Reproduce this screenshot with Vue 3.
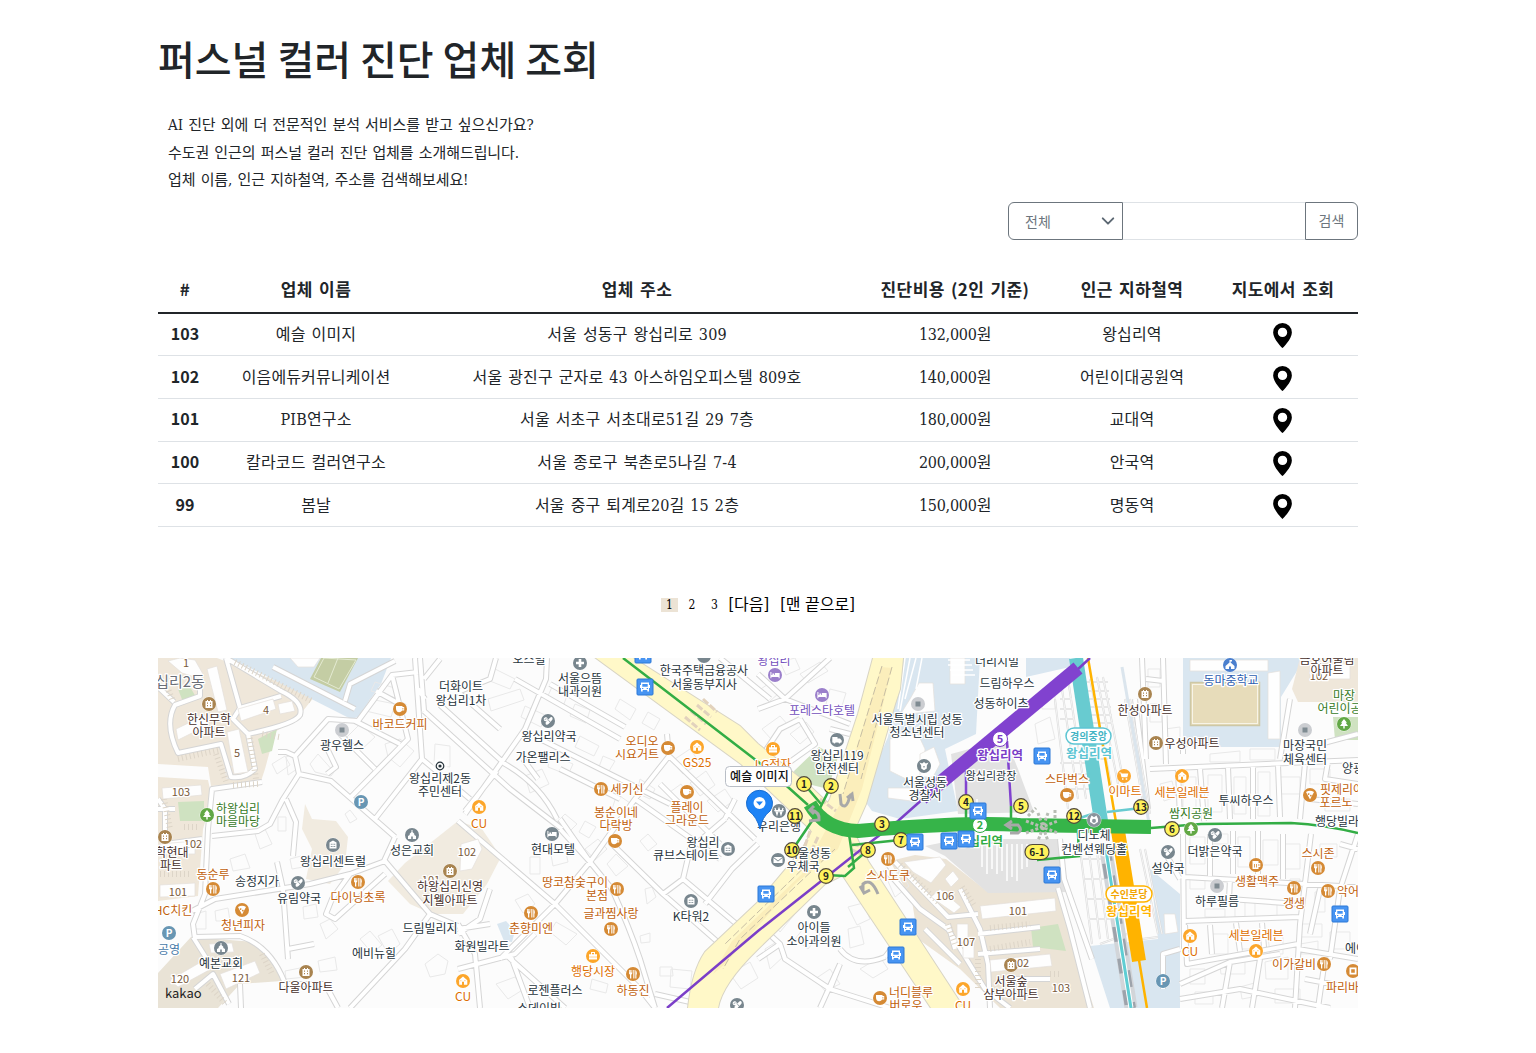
<script setup>
const rows = [
  { no: 103, name: '예슬 이미지', address: '서울 성동구 왕십리로 309', price: '132,000원', station: '왕십리역' },
  { no: 102, name: '이음에듀커뮤니케이션', address: '서울 광진구 군자로 43 아스하임오피스텔 809호', price: '140,000원', station: '어린이대공원역' },
  { no: 101, name: 'PIB연구소', address: '서울 서초구 서초대로51길 29 7층', price: '180,000원', station: '교대역' },
  { no: 100, name: '칼라코드 컬러연구소', address: '서울 종로구 북촌로5나길 7-4', price: '200,000원', station: '안국역' },
  { no: 99, name: '봄날', address: '서울 중구 퇴계로20길 15 2층', price: '150,000원', station: '명동역' },
]

// Land-use areas: [fill, path]
const areas = [
  ['#efe7da', 'M158 659H217L315 697 298 718 275 733 265 770 261 782 211 787 208 768 158 765Z'],
  ['#efe7da', 'M158 778L208 781 212 800 203 830 198 897 158 902Z'],
  ['#e9e3d6', 'M158 974L191 938 255 943 272 958 282 982 240 985 218 1009H158Z'],
  ['#f1ebe0', 'M305 805L312 820 336 822 348 838 345 865 330 885 306 880 312 850 302 830Z'],
  ['#f1ebe0', 'M405 864L458 822 482 830 501 858 487 885 463 915 432 915 410 905 388 882Z'],
  ['#d9e6f0', 'M230 659H391L381 685 358 718 351 720Z'],
  ['#d9e6f0', 'M903 659H980L976 735 945 750 958 812 900 820 872 812 862 798 888 738Z'],
  ['#d9e6f0', 'M497 925L506 922 515 932 512 943 504 942Z'],
  ['#d9e6f0', 'M1026 659H1070V668L1026 678Z'],
  ['#d9e6f0', 'M1183 659H1305L1281 698V748H1183Z'],
  ['#d9e6f0', 'M1090 947L1158 940 1150 870 1180 895V1009H1110Z'],
  ['#ece4d6', 'M890 862L915 856 946 860 988 893 1058 889 1075 950 1094 1009H1000L960 970 918 940 912 902Z'],
  ['#efe7da', 'M1300 659H1358V703H1298L1292 690Z'],
  ['#e2e2e2', 'M951 755L1006 740 1018 770 1034 813 958 815Z'],
  ['#e2e2e2', 'M925 847L960 840H1058L1070 893 988 894 945 857Z'],
  ['#cfe2c1', 'M178 690L190 688 196 698 183 703Z M258 740L277 730 272 752 262 755Z M178 803L204 802V822L180 822Z'],
  ['#cfe2c1', 'M819 748L838 758 828 790 796 782 794 772Z M1031 929L1058 925 1066 952 1033 948Z M1333 718H1358V741H1335Z'],
  ['#c4cda4', 'M321 659H358L340 693 310 680Z'],
  ['#e7dcba', 'M1190 683H1260V727H1190Z'],
]

const blocks = [
  'M168 662L180 659 195 661 203 675 198 679 182 674Z', 'M207 670L217 667 227 711 218 713Z', 'M238 710L273 700 276 710 241 722Z',
  'M278 705L292 702 295 712 280 715Z', 'M176 730L205 716 208 726 178 741Z', 'M227 733L239 730 248 773 234 775Z',
  'M162 789L201 786 202 796 163 800Z', 'M160 886L195 884V897L160 898Z', 'M160 845L195 842V855H160Z', 'M170 981L206 960 211 970 178 988Z',
  'M220 975L255 962 260 974 226 990Z', 'M209 945L232 944 234 953 211 954Z', 'M461 845L478 840 482 850 472 870 460 872Z',
  'M904 863L940 858 946 866 931 884 913 873Z', 'M945 880L953 872 959 880 951 888Z M931 898L940 890 961 908 954 914Z', 'M957 925H968V943H957Z',
  'M963 943H974V959H963Z', 'M980 907L1055 899 1056 912 982 920Z', 'M990 961L1050 955 1052 967 991 973Z', 'M1190 661H1268V672H1190Z',
  'M1268 674L1280 672V740H1268Z', 'M890 740L918 735 925 750 922 784 906 780 890 772Z', 'M888 789L919 789V803L888 799Z',
  'M910 700L919 684 933 684 935 712 900 716Z', 'M920 755L934 748 940 765 933 778 920 778Z', 'M1310 665H1350V680H1310Z',
  'M1164 915H1175L1178 933 1165 935Z', 'M290 659H320L314 668 298 668Z', 'M950 659H965V685H950Z',
]

// Faint building footprints
const footprints = 'M272 765L285 757 290 766 277 775Z M286 758L293 755 297 770 288 776Z M310 765L318 755 334 773 331 777 315 773Z M385 745L400 740 414 752 400 768 388 758Z M435 745L450 747V768L434 766Z M345 815L350 811 357 820 350 824Z M278 818H286V832H278Z M225 770L240 765 241 776 227 780Z M320 925L330 920 338 930 326 940Z M303 908L316 905 318 918 304 920Z M360 940L370 932 382 946 372 954Z M378 937L392 930 400 945 388 955Z M425 965L438 955 448 962 445 975 430 978Z M285 972L305 968 306 978 286 980Z M318 962L335 958 337 971 320 973Z M290 860L301 857 303 868 292 870Z M230 860L245 855 250 869 233 872Z M255 835L265 830 272 845 260 850Z M195 915L206 912V930H195Z M215 912L228 909 230 922H216Z M345 740L360 725 375 738 360 752Z M370 700L395 705 391 718 366 712Z M375 683L398 690 396 699 371 692Z M488 700L520 690 524 701 491 712Z M495 670L515 680 510 690 490 682Z M525 707L545 716 541 728 521 718Z M575 705L590 711 586 724 570 717Z M552 688L568 694 564 705 547 699Z M525 777L542 770 549 785 530 794Z M550 755L573 765 568 776 548 768Z M580 737L599 747 594 757 575 748Z M603 757L615 762 609 772 599 768Z M620 700L636 710 630 721 615 710Z M648 713L660 720 654 731 642 724Z M672 762L690 750 700 764 683 775Z M690 784L706 772 715 786 700 797Z M707 802L725 790 733 802 718 813Z M670 793L681 785 690 799 679 806Z M640 780L655 790 650 800 637 794Z M617 795L630 804 624 817 612 810Z M555 825L565 815 577 825 567 835Z M585 822L596 828 589 839 579 833Z M607 865L616 855 628 867 616 877Z M640 842L648 835 657 845 648 852Z M530 858H540V875H530Z M550 850L564 845 568 863 553 867Z M515 901L528 895 535 905 523 914Z M556 923L577 935 566 946 550 933Z M640 937L650 934V943L641 944Z M660 968H672L673 977H660Z M671 970L692 972 690 990 670 988Z M585 850L598 840 607 850 595 861Z M645 890L652 888 656 898 647 905Z M592 980L608 985 606 994 590 990Z M496 985L515 978 524 990 508 1000Z M758 692L771 683 780 693 769 703Z M780 663L795 659 800 670 786 676Z M800 675L820 663 828 672 808 684Z M830 690L846 694 841 710 826 705Z M762 730L780 717 789 727 771 740Z M790 735L806 723 814 733 800 745Z M848 908L863 904 870 920 857 926Z M866 900L880 893 885 910 873 918Z M848 930L860 927 864 945 850 949Z M887 880L900 873 909 887 895 898Z M860 970L880 958 888 970 873 979Z M795 940L807 925 820 935 808 950Z M770 920L785 903 799 910 780 933Z M730 975L750 963 758 979 741 990Z M765 950L778 942 784 957 770 970Z M815 980L830 970 840 985 825 992Z M1042 695H1055V710H1042Z M1035 725L1050 718 1055 740 1038 745Z M1148 670H1160V688H1148Z M1150 705H1162V723H1150Z M1165 730L1180 728V745H1166Z M1210 755L1240 752V763H1210Z M1250 750H1275V761H1250Z M1160 785L1172 782 1176 798 1164 802Z M1183 778H1196V812H1183Z M1208 776H1222V813H1208Z M1234 778H1246V815H1234Z M1258 773H1270V817H1258Z M1280 778H1300V795H1280Z M1310 770H1330V785H1310Z M1190 838H1205V865H1190Z M1212 835H1228V845H1212Z M1238 838H1250V868H1238Z M1263 841H1278V866H1263Z M1285 845H1300V870H1285Z M1320 845H1337V858H1320Z M1190 880H1205V890H1190Z M1205 910H1225V918H1205Z M1235 900H1245V918H1235Z M1255 903H1277V918H1255Z M1290 880H1300V893H1290Z M1315 893H1325V913H1315Z M1210 935H1228V955H1210Z M1240 940H1262V950H1240Z M1268 938L1283 936V955H1270Z M1300 925H1322V938H1300Z M1330 933H1350V950H1330Z M1190 970H1205V985H1190Z M1220 967L1245 960V975H1221Z M1265 963L1288 958V980H1266Z M1300 945L1318 942V955H1301Z M1195 993H1213V1005H1195Z M1240 988L1258 983V997L1242 1000Z M1275 990H1300V1004H1275Z M1325 800H1350V812H1325Z'

// Minor streets
const streets = 'M226 659L281 692 Q304 703 300 716 Q295 725 248 735 L255 770 Q245 780 231 778 L221 745 178 754 Q164 725 175 706 L200 697 200 680 190 663 M226 659L240 709 M158 688L174 703 M240 709L281 697 M240 709L233 720 248 735 M158 800L165 810V845L202 840 M158 810H175 M273 668L355 710 M345 702L350 685 395 662 M295 757L328 720 358 722 392 676 418 673 M392 676L408 740 349 800 M376 692L405 708 M355 722L400 745 M340 735L375 770 M325 745L336 768 327 775 M415 659L422 760 375 820 M422 760L470 800 M278 753H286L295 757 299 775 283 800 270 825 258 832 212 837 M299 775L331 782 395 838 M262 783L212 790 208 830 205 895 193 925 195 940 M395 838L384 862 M385 862L350 875 310 885 215 900 192 912 M277 863L283 890 288 960 M288 950L314 945 M293 857L296 823 286 800 M385 862L430 915 458 927 M350 875L332 900 326 915 335 920 385 875 M195 938L240 937 Q270 947 284 982 M193 938L210 965 M195 990L213 975 229 1005 M240 985L241 1009 M284 985H325L338 1009 M430 915L405 950 350 1009 M418 690L425 700 M420 659L424 712 M424 680L440 660 M424 712L510 790 562 830 M440 706L505 765 Q540 785 557 820 M458 693L500 730 M458 693L490 680 496 659 M547 659L546 680 525 730 465 815 M515 680L620 740 M550 685L625 728 M540 740L600 770 670 805 M523 760L538 780 M497 772L465 812 M667 735L669 757 635 800 590 863 555 905 500 960 M669 757L755 840 M635 800L720 860 M660 785L720 845 M620 800L560 770 M458 822L555 905 640 990 655 1009 M560 820L590 863 612 890 Q630 930 640 960 L655 1009 M590 863L560 830 M610 843L663 895 683 880 690 850 725 820 M663 895L720 945 M683 880L740 928 M705 905L732 870 758 845 M725 820L735 800 M458 970L515 955 535 935 M458 925L475 955 480 1009 M505 955L565 1009 M510 955L530 1009 M490 890L480 920 458 935 M458 930L490 925 M655 995L690 1003 M758 675L785 700 850 725 M785 700L830 659 M720 659L770 700 M758 710L785 700 M800 720L815 745 780 770 M760 760L780 730 800 720 M830 730L850 735 M758 925L780 945 785 960 830 990 890 1009 M780 945L758 960 M840 965L820 1009 M840 950Q855 970 885 958 M885 958L895 945 M830 990L840 965 M775 920L758 930 M885 870L920 910 948 930 985 990 1010 1009 M948 925L955 950 M895 863L948 918 978 915 M960 890L980 930 988 965 990 1009 M978 935L1040 928 M978 955L1040 950 M1010 980H1050 M925 930L960 965 M1058 889L1070 930 1090 1009 M1060 840L1064 880 1085 940 1092 960 M1142 659L1146 760 M1163 659L1166 765 M1146 680L1163 682 M1135 700L1148 810 M1150 770L1358 761 M1178 771L1180 820 M1200 770L1204 822 M1228 768L1230 820 M1253 765V820 M1278 766L1280 818 M1305 764L1300 820 M1328 763L1325 780 1358 785 M1310 800L1358 805 M1320 745L1358 735 M1183 755V748 M1290 700L1280 760 M1183 835L1184 950 M1185 878L1358 888 M1210 835V877 M1233 832V875 M1258 832V875 M1283 835V880 M1311 835L1300 925 1295 1009 M1320 890L1310 935 M1358 835L1340 890 1330 960 M1230 880L1229 900 1300 905 M1185 922L1300 918 M1185 926L1187 965 1298 945 M1210 926L1212 955 M1236 924L1240 952 M1262 924L1264 948 M1180 985L1230 963 1280 955 M1230 963L1222 1009 M1260 960L1252 1009 M1180 1000L1240 990 1330 1009 M1298 950L1358 960 M1305 980L1358 990 M1325 960L1318 1009 M1163 850L1180 880 M1180 950L1163 955V990 M1340 845L1358 850'

const parking = 'M235 663L312 702 M250 739L256 780 M178 760L218 751 M216 755L226 782 M258 785L232 786 M279 738L262 735 M172 700L168 690 M208 985L225 1004 M262 955L272 975 M900 866L940 905 M962 888L975 908 M990 929L1030 925 M990 950L1030 943 M978 960V990 M948 925L955 945 M1050 975H1060 M164 800L170 830 M184 828H200 M160 875H190'

const railYard = 'M1085 683H1108 M1083 692H1109 M1082 700H1110 M1081 708H1111 M1080 716H1112 M1080 724H1113 M1081 760H1113 M1060 700H1072 M1060 710H1073 M1060 720H1074 M1060 764H1086 M1062 775H1088 M1064 790H1090 M1090 680L1112 790 M1097 678L1119 790 M1103 678L1125 790 M1062 690L1078 800 M1068 680L1086 800 M1055 700L1068 810 M1125 700L1145 815 M1130 700L1150 815 M1083 860H1103 M1085 880H1104 M1086 900H1107 M1088 920H1110 M1080 850L1092 945 M1088 845L1100 940 M1096 845L1108 940 M1140 850L1158 935 M1145 850L1162 935 M1100 945L1127 935 M1142 940L1158 938'

const hatch = 'M905 659L898 710 M910 659L900 712 M916 659L905 700 M922 659L916 690 M948 661H970 M948 666H972 M950 671H973 M952 676H975 M977 800V835 M982 838V868 M987 845V875 M992 845V870 M997 845V875 M1002 845V872 M1007 845V882 M1012 845V878 M1017 845V882 M1022 845V870 M1027 845V868'

// Points of interest: [kind, x, y]
const pois = [
  ['apt', 209, 705], ['dot', 342, 731], ['cafe', 400, 710], ['ring', 440, 767], ['park', 361, 803], ['tree', 207, 816],
  ['cu', 479, 808], ['church', 412, 836], ['apt', 165, 838], ['build', 333, 846], ['food', 213, 890], ['pill', 298, 884],
  ['food', 358, 883], ['pizza', 242, 911], ['park', 169, 934], ['church', 221, 949], ['apt', 306, 973], ['apt', 450, 872],
  ['cu', 463, 982], ['plus', 580, 664], ['pill', 548, 722], ['cafe', 668, 749], ['cu', 697, 748], ['food', 601, 790],
  ['cafe', 687, 793], ['hotel', 552, 835], ['cafe', 615, 842], ['build', 728, 850], ['food', 617, 890], ['build', 691, 902],
  ['food', 531, 914], ['food', 611, 930], ['bag', 593, 957], ['food', 633, 975], ['pill', 737, 1006], ['dot2', 704, 657],
  ['bed', 775, 676], ['bed', 822, 696], ['bag', 773, 750], ['truck', 837, 741], ['dot', 918, 705], ['police', 924, 767],
  ['won', 779, 812], ['mail', 778, 861], ['food', 888, 860], ['plus', 814, 913], ['cafe', 880, 999], ['cu', 963, 990],
  ['apt', 1011, 966], ['school', 1230, 666], ['apt', 1145, 695], ['apt', 1156, 744], ['dot', 1305, 731], ['tree', 1344, 725],
  ['cart', 1124, 777], ['cu', 1182, 777], ['cafe', 1067, 796], ['pizza', 1310, 796], ['police2', 1094, 821], ['tree', 1191, 830],
  ['pill', 1215, 836], ['pill', 1168, 853], ['beer', 1256, 866], ['food', 1318, 869], ['dot', 1217, 887], ['food', 1294, 889],
  ['food', 1328, 892], ['cu', 1190, 937], ['cu', 1256, 952], ['park', 1163, 982], ['food', 1324, 965], ['bread', 1353, 972],
]
const poiColor = {
  apt: '#a98450', dot: '#cbcdd1', cafe: '#d58a35', ring: '#fff', park: '#6896b3', tree: '#62a845', cu: '#fca62b', church: '#78868e',
  build: '#78868e', food: '#d58a35', pill: '#78868e', pizza: '#d58a35', plus: '#78868e', hotel: '#78868e', bag: '#fca62b', dot2: '#78868e',
  bed: '#9b7fcb', truck: '#78868e', police: '#78868e', won: '#78868e', mail: '#78868e', school: '#4b7fce', cart: '#fca62b',
  police2: '#8a939b', beer: '#d58a35', bread: '#d58a35',
}
const glyph = {
  apt: 'M-3.5-3H-2V-4H-1V-3H1V-4H2V-3H3.5V4H-3.5Z M-2-1.5V-.3H-1V-1.5Z M1-1.5V-.3H2V-1.5Z M-2 1V2.2H-1V1Z M1 1V2.2H2V1Z',
  build: 'M-3.5 3.5V-2.5L0-4.5 3.5-2.5V3.5Z M-2.2-1.3V-.3H-1.2V-1.3Z M1.2-1.3V-.3H2.2V-1.3Z M-2.2 1V2H-1.2V1Z M1.2 1V2H2.2V1Z M-.5-1.3V-.3H.5V-1.3Z M-.5 1V2H.5V1Z',
  cafe: 'M-4-3H2.5V-2H4.2V1.5H2.2Q1.2 3.2-.8 3.2-4 3-4-.5Z M2.5-1V.5H3.3V-1Z',
  food: 'M-4-4H-3.2V-1.5H-2.7V-4H-2V-1.5H-1.5V-4H-.7V-.5L-1.7.7V4.5H-3V.7L-4-.5Z M0.3-4H1.4V4.5H.3Z M2.3-4Q4.2-3 3.8.6H3.4V4.5H2.3Z',
  pizza: 'M-4-3Q0-5.5 4-3L0 4.5Z M-1.4-1.8A.8.8 0 1 0-1.3-1.8Z M.8-.3A.8.8 0 1 0 .9-.3Z',
  tree: 'M0-5L3-1.2H1.7L4 2H.7V4.5H-.7V2H-4L-1.7-1.2H-3Z',
  cu: 'M-4.3-.8L0-4.5 4.3-.8V3.8H1V.8H-1V3.8H-3.8V-.8Z M-2.5-.8V.2H-1.7V-.8Z M1.6-1V.2H2.3V-1Z',
  church: 'M-.5-5H.5V-3L2.3-1.3V0L4 1V4H.8V1.5H-.8V4H-4V1L-2.3 0V-1.3L-.5-3Z',
  pill: 'M-4.2-1Q-4.8-3.2-2.8-3.8-1-4.2-.4-2.4.2-.5-1.5.2-3.5.6-4.2-1Z M1.8-3Q3.5-4.8 4.5-3.2 5.2-1.8 3.5-.2L.8 2.8Q-1 4.4-2.2 3.2-3.2 1.8-1.4.3Z M-3.2-1.3L-1.2-2 -1.4-2.6 -3.4-1.9Z M.2-.6L2 1.2 2.4.8 .6-1Z',
  plus: 'M-1.3-4H1.3V-1.3H4V1.3H1.3V4H-1.3V1.3H-4V-1.3H-1.3Z',
  hotel: 'M-4.6-3H-3.6V0H-2.6V-1.6H-.7V0H0V-2H4.6V3.3H3.6V2H-3.6V3.3H-4.6Z',
  bed: 'M-4.6-3H-3.6V0H-2.6V-1.6H-.7V0H0V-2H4.6V3.3H3.6V2H-3.6V3.3H-4.6Z',
  bag: 'M-4-1.8H-2V-4H2V-1.8H4V3.6H-4Z M-1-3V-1.8H1V-3Z M-4 .8V1.3H4V.8Z',
  truck: 'M-4.7-3H.5V-1.5H3L4.7.5V2.5H3.5A1 1 0 0 1 1.5 2.5H-1.5A1 1 0 0 1-3.6 2.5H-4.7Z',
  police: 'M-4.5-3.5L-1.8-2.5 0-4 1.8-2.5 4.5-3.5 2.8-.6V2.5L0 4.3-2.8 2.5V-.6Z M-1 .2L0 2 1 .2Z',
  police2: 'M-2.5-4.5L0-2.8 2.5-4.5 4-1V2L0 4.6-4 2V-1Z M-1.8-.5V2L0 3 1.8 2V-.5L0-1.3Z',
  mail: 'M-4.5-3H4.5L0 .5Z M-4.5-2V3H4.5V-2L0 1.6Z',
  school: 'M-.5-5H2V-3.5H.6V-2.5L4.5 1V4H1V1.5H-1V4H-4.5V1L-.5-2.5Z',
  cart: 'M-4.7-3.6H-2.8L-2.4-2.5H4.3L3.3 1.3H-2.5L-3.5-2.7H-4.7Z M-2 2.2H-.5V3.7H-2Z M1.7 2.2H3.2V3.7H1.7Z',
  beer: 'M-3.5-4H2.5V-2H4.3V2H2.5V4H-3.5Z M-2-1V2.5H-1.2V-1Z M0-1V2.5H.8V-1Z M2.5-1V1H3.3V-1Z',
  bread: 'M-3.5-3.5H3.5V3.5H-3.5Z M-1.8-1.8V1.8H1.8V-1.8Z',
}

const G = '#27343c', O = '#bf5f0c', S = '#dd6e00', B = '#46302b', N = '#7a5a3c', T = '#357a1e'
// Map labels: [text, centre x, centre y, colour, size]
const labels = [
  ['십리2동', 180, 683, '#6b6f78', 15], ['1', 186, 663, N, 11], ['4', 266, 710, N, 11], ['5', 237, 753, N, 11], ['103', 181, 792, N, 11],
  ['한신무학', 209, 720, B], ['아파트', 209, 733, B], ['광우헬스', 342, 746, G], ['바코드커피', 400, 725, O], ['더화이트', 461, 687, G],
  ['왕십리1차', 461, 701, G], ['왕십리제2동', 440, 779, G], ['주민센터', 440, 792, G], ['하왕십리', 238, 809, T], ['마을마당', 238, 822, T],
  ['CU', 479, 824, S], ['성은교회', 412, 851, G], ['102', 193, 844, N, 11], ['102', 467, 852, N, 11], ['101', 431, 880, N, 11], ['학현대', 172, 853, B], ['파트', 171, 866, B], ['왕십리센트럴', 333, 862, G], ['동순루', 213, 875, O], ['송정지가', 257, 882, G], ['101', 178, 892, N, 11],
  ['유림약국', 299, 899, G], ['다이닝초록', 358, 898, O], ['하왕십리신영', 450, 887, B], ['지웰아파트', 450, 901, B], ['HC치킨', 173, 911, O],
  ['청년피자', 243, 926, O], ['드림빌리지', 430, 929, G], ['공영', 169, 950, '#4779a8'], ['에비뉴힐', 374, 954, G], ['화원빌라트', 482, 947, G],
  ['예본교회', 221, 964, G], ['120', 180, 979, N, 11], ['121', 241, 978, N, 11], ['다울아파트', 306, 988, B], ['CU', 463, 997, S],
  ['오스빌', 529, 660, G], ['서울으뜸', 580, 679, G], ['내과의원', 580, 692, G], ['왕십리약국', 549, 737, G], ['가온팰리스', 543, 758, G],
  ['한국주택금융공사', 704, 671, G], ['서울동부지사', 704, 685, G], ['오디오', 642, 742, O], ['시요거트', 637, 755, O], ['GS25', 697, 763, S],
  ['세키신', 627, 790, O], ['봉순이네', 616, 813, O], ['다락방', 616, 826, O], ['플레이', 687, 808, O], ['그라운드', 687, 821, O],
  ['현대모텔', 553, 850, G], ['왕십리', 703, 843, G], ['큐브스테이트', 686, 856, G], ['땅코참숯구이', 575, 883, O], ['본점', 597, 896, O],
  ['글과찜사랑', 611, 914, O], ['K타워2', 691, 917, G], ['춘향미엔', 531, 929, O], ['행당시장', 593, 972, S], ['하동진', 633, 991, O],
  ['로젠플러스', 555, 991, G], ['스데이빌', 539, 1009, G], ['왕십리', 774, 661, '#7350bc'], ['포레스타호텔', 822, 711, '#7350bc'],
  ['LG전자', 773, 765, S], ['왕십리119', 837, 756, G], ['안전센터', 837, 769, G], ['서울특별시립 성동', 917, 720, G], ['청소년센터', 917, 733, G],
  ['서울성동', 925, 783, G], ['경찰서', 925, 796, G], ['우리은행', 779, 827, G], ['서울성동', 809, 854, G], ['우체국', 803, 867, G],
  ['스시도쿠', 888, 876, O], ['아이들', 814, 928, G], ['소아과의원', 814, 942, G], ['106', 945, 896, N, 11], ['107', 966, 942, N, 11],
  ['101', 1018, 911, N, 11], ['02', 1023, 963, N, 11], ['103', 1061, 988, N, 11], ['서울숲', 1011, 982, B], ['삼부아파트', 1011, 995, B], ['너디블루', 911, 993, O], ['버로우', 906, 1006, O],
  ['CU', 963, 1006, S], ['너리치빌', 997, 662, G], ['드림하우스', 1007, 684, G], ['성동하이츠', 1001, 704, G], ['왕십리광장', 991, 776, G, 11],
  ['스타벅스', 1067, 780, O], ['동마중학교', 1231, 681, '#2d5eb0'], ['한성아파트', 1145, 711, B], ['우성아파트', 1192, 744, B],
  ['금호어울림', 1327, 660, B], ['102', 1319, 676, N, 11], ['아파트', 1327, 671, B], ['마장', 1344, 696, T], ['어린이공원', 1345, 709, T], ['마장국민', 1305, 746, G], ['체육센터', 1305, 760, G],
  ['양광', 1353, 769, G], ['이마트', 1125, 792, S], ['세븐일레븐', 1182, 793, S], ['투씨하우스', 1246, 801, G], ['핏제리아', 1342, 790, O], ['포르노', 1336, 803, O],
  ['쌈지공원', 1191, 814, T], ['행당빌라', 1337, 822, G], ['디노체', 1094, 836, G], ['컨벤션웨딩홀', 1094, 850, G], ['더밝은약국', 1215, 852, G],
  ['설약국', 1168, 869, G], ['스시존', 1318, 854, O], ['생활맥주', 1257, 882, O], ['하루필름', 1217, 902, G], ['갱생', 1294, 904, O], ['악어', 1348, 892, O],
  ['세븐일레븐', 1256, 936, S], ['CU', 1190, 952, S], ['에이', 1356, 949, G], ['이가갈비', 1294, 965, O], ['파리바게', 1348, 988, O],
]

const buses = [[643, 656], [645, 688], [766, 895], [915, 843], [949, 842], [966, 840], [978, 812], [1042, 757], [1052, 876], [908, 928], [896, 956], [1340, 915]]
const exits = [['1', 804, 785], ['2', 831, 787], ['11', 795, 817], ['10', 792, 851], ['3', 882, 825], ['7', 901, 841], ['8', 868, 851], ['9', 826, 877], ['4', 966, 803], ['5', 1021, 807], ['12', 1074, 817], ['13', 1141, 808], ['6', 1172, 830]]
</script>

<template>
  <main class="page">
    <h1>퍼스널 컬러 진단 업체 조회</h1>
    <div class="intro">
      <p>AI 진단 외에 더 전문적인 분석 서비스를 받고 싶으신가요?</p>
      <p>수도권 인근의 퍼스널 컬러 진단 업체를 소개해드립니다.</p>
      <p>업체 이름, 인근 지하철역, 주소를 검색해보세요!</p>
    </div>

    <form class="search" @submit.prevent>
      <button type="button" class="pick">
        전체
        <svg width="14" height="14" viewBox="0 0 16 16"><path d="M2 5l6 6 6-6" fill="none" stroke="#5c6873" stroke-width="2.2" stroke-linecap="round" stroke-linejoin="round" /></svg>
      </button>
      <input type="text" aria-label="검색어" />
      <button class="go">검색</button>
    </form>

    <table>
      <colgroup>
        <col class="c1" /><col class="c2" /><col class="c3" /><col class="c4" /><col class="c5" /><col class="c6" />
      </colgroup>
      <thead>
        <tr><th>#</th><th>업체 이름</th><th>업체 주소</th><th>진단비용 (2인 기준)</th><th>인근 지하철역</th><th>지도에서 조회</th></tr>
      </thead>
      <tbody>
        <tr v-for="r in rows" :key="r.no">
          <th>{{ r.no }}</th>
          <td>{{ r.name }}</td>
          <td>{{ r.address }}</td>
          <td class="price">{{ r.price }}</td>
          <td>{{ r.station }}</td>
          <td class="pin">
            <svg width="25" height="25" viewBox="0 0 16 16"><path d="M8 16s6-5.686 6-10A6 6 0 0 0 2 6c0 4.314 6 10 6 10zm0-7a3 3 0 1 1 0-6 3 3 0 0 1 0 6z" /></svg>
          </td>
        </tr>
      </tbody>
    </table>

    <nav class="pager">
      <span class="num on">1</span><span class="num">2</span><span class="num">3</span>
      <span class="word">[다음]</span><span class="word">[맨 끝으로]</span>
    </nav>

    <svg class="map" width="1200" height="350" viewBox="158 659 1200 350">
      <rect x="158" y="659" width="1200" height="350" fill="#fcfcfc" />
      <path v-for="(a, i) in areas" :key="'a' + i" :fill="a[0]" :d="a[1]" />
      <path d="M324 659L356 661 339 690 314 678Z M338 659L328 684" fill="none" stroke="#e4ead2" />
      <rect x="1190.5" y="683.5" width="69" height="43" fill="none" stroke="#cdc8a6" stroke-width="1.5" />
      <rect x="1192.5" y="685.5" width="65" height="39" fill="none" stroke="#f7f4e7" />
      <path :d="footprints" fill="none" stroke="#e9e9e9" />
      <path :d="streets" class="street edge" />
      <path :d="streets" class="street" />
      <path :d="parking" fill="none" stroke="#ddd5c8" stroke-width="6" stroke-dasharray="1 3" />
      <path v-for="(b, i) in blocks" :key="'b' + i" :d="b" fill="#fefefe" stroke="#e4e0db" stroke-width=".7" />
      <path :d="railYard" fill="none" stroke="#dadada" stroke-width="2" />
      <path :d="railYard" fill="none" stroke="#fff" stroke-width=".7" />
      <path :d="hatch" fill="none" stroke="#fff" stroke-width="1.5" />
      <path d="M1122 668L1150 830" stroke="#dbe5ed" stroke-width="3" />

      <!-- Arterial roads -->
      <path class="arterial edge" d="M873 659H903L900 690 895 705 866 805 846 850 841 877 825 885 758 950 Q722 985 718 1009H688Q692 972 705 953L758 903 801 852 830 800 858 715Z M596 659H633L740 727 758 745 811 788 850 825 868 862 958 1000 964 1009H931L843 877 810 830 741 765Z" />
      <path class="arterial" d="M873 659H903L900 690 895 705 866 805 846 850 841 877 825 885 758 950 Q722 985 718 1009H688Q692 972 705 953L758 903 801 852 830 800 858 715Z M596 659H633L740 727 758 745 811 788 850 825 868 862 958 1000 964 1009H931L843 877 810 830 741 765Z" />
      <path d="M881 668L892 669 862 790 838 850 795 885 725 965 713 975 732 942 802 875 840 805Z" fill="#fbeebb" />
      <path d="M882 667L843 795 M892 668L861 780 M835 850L740 940 723 970 M818 855L725 945" fill="none" stroke="#c7bea4" stroke-dasharray="8 3" />
      <path d="M685 718L700 731 M691 712L706 725 M697 706L711 718 M703 700L717 713 M820 800L836 812 M817 807L828 817 M850 850L866 857 M852 845L868 849 M810 832L804 850 M818 838L810 855" stroke="#e2d2bd" stroke-width="3" stroke-dasharray="7 2" />

      <!-- Subway lines -->
      <g fill="none">
        <path d="M1105 845L1131 1009" stroke="#d2d5d9" stroke-width="13" />
        <path d="M1107.500 845L1133.500 1009" stroke="#9da3ab" stroke-width="5" stroke-dasharray="17 15" />
        <path d="M1101 845L1127 1009" stroke="#9da3ab" stroke-width="4" stroke-dasharray="15 17" stroke-dashoffset="12" />
        <path d="M1105 845L1131 1009" stroke="#fff" stroke-width="5" />
        <path d="M1105 845L1131 1009" stroke="#5fcdd3" stroke-width="3" />
        <path d="M1088 659L1118 835 1147 1009" stroke="#ffb300" stroke-width="2.5" />
        <path d="M1118 832L1139 962" stroke="#ffb300" stroke-width="14" />
        <path d="M1076 659L1101 822" stroke="#68cbd0" stroke-width="14" />
        <path d="M1107 813L1141 809 M1080 819L1095 814" stroke="#68cbd0" stroke-width="2.5" />
        <path d="M1090 659L1077 671 M925 798L898 822 868 845 758 932 667 1009" stroke="#7b3ec8" stroke-width="2.5" />
        <path d="M1078 669L922 799" stroke="#8142cf" stroke-width="14" />
        <path d="M966 772V800 M1007 742L1011 807" stroke="#8142cf" stroke-width="2.5" />
        <path d="M623 659L770 772 808 806 M804 785L821 805 M831 787L818 813 795 847 M966 803V820 M1011 807V822 M849 835L854 869 845 877 826 876 M868 851L848 868 M900 841L852 846 M1151 829L1201 825 1291 824Q1325 826 1358 834 M1037 861L1079 857 1078 834" stroke="#33ad45" stroke-width="2.5" />
        <path d="M810 805Q825 831 858 832Q900 828 945 826T1020 826L1151 828" stroke="#36b449" stroke-width="14" />
      </g>
      <g fill="none" stroke="#a8a8a8" stroke-width="3">
        <path d="M840 795L841 805Q845 810 848 803L851 795 M847 799L852 795 853 802" />
        <path d="M863 892L863 885Q871 878 878 895 M860 887L864 894 870 891" />
        <path d="M1007 826H1018Q1023 831 1018 834H1010 M1012 822L1006 826 1012 830" />
        <path d="M809 822L819 821Q820 813 811 811 M814 807L810 811 814 815" />
      </g>
      <path d="M1026 822L1058 834 M1026 834L1058 822 M1038 814L1048 842 M1048 814L1038 842 M1028 817L1036 809 M1055 811V819" stroke="#b8bdb4" stroke-width="3" stroke-dasharray="3 2" />

      <!-- Points of interest -->
      <g v-for="(p, i) in pois" :key="'p' + i" :transform="`translate(${p[1]} ${p[2]})`">
        <circle r="7.5" fill="#fff" opacity=".7" />
        <circle v-if="p[0] !== 'ring'" r="7" :fill="poiColor[p[0]]" />
        <path v-if="glyph[p[0]]" :d="glyph[p[0]]" fill="#fff" fill-rule="evenodd" />
        <rect v-else-if="p[0] === 'dot'" x="-2.5" y="-2.5" width="5" height="5" fill="#7f8b92" />
        <g v-else-if="p[0] === 'ring'"><circle r="3.8" fill="none" stroke="#27343c" stroke-width="1.2" /><circle r="1.6" fill="#27343c" /></g>
        <text v-else-if="p[0] === 'park'" class="sign" y="3.6" font-size="10">P</text>
        <path v-else-if="p[0] === 'won'" d="M-4-3L-2 3.500 0-2.500 2 3.500 4-3M-4.700-.3H4.700" fill="none" stroke="#fff" stroke-width="1.200" />
      </g>

      <g class="labels">
        <text v-for="(l, i) in labels" :key="'l' + i" :x="l[1]" :y="l[2] + 4.5" :fill="l[3]" :font-size="l[4] || 12">{{ l[0] }}</text>
      </g>

      <!-- Station names -->
      <g class="station">
        <text x="1000" y="761" fill="#7b3ec8">왕십리역</text>
        <text x="980" y="847" fill="#33ad45">왕십리역</text>
        <text x="1089" y="759" fill="#5cc5d3">왕십리역</text>
        <text x="1129" y="917" fill="#ffb300">왕십리역</text>
      </g>
      <g class="badge">
        <circle cx="1000" cy="740" r="7.5" fill="#fff" stroke="#7b3ec8" /><text x="1000" y="744" fill="#7b3ec8" font-size="11">5</text>
        <circle cx="980" cy="826" r="7.5" fill="#fff" stroke="#33ad45" /><text x="980" y="830" fill="#33ad45" font-size="11">2</text>
        <rect x="1066" y="729" width="45" height="16" rx="8" fill="#fff" stroke="#5cc5d3" stroke-width="1.500" /><text x="1088.500" y="741" fill="#43b4c4" font-size="10">경의중앙</text>
        <rect x="1106" y="887" width="46" height="16" rx="8" fill="#fff" stroke="#ffb300" stroke-width="1.500" /><text x="1129" y="899" fill="#f2a500" font-size="10">수인분당</text>
      </g>

      <g v-for="(e, i) in exits" :key="'e' + i">
        <circle :cx="e[1]" :cy="e[2]" r="7.300" fill="#fff35c" stroke="#51483a" stroke-width="1.2" />
        <text class="exit" :x="e[1]" :y="e[2] + 3.7">{{ e[0] }}</text>
      </g>
      <rect x="1025" y="845.500" width="24" height="15" rx="7.500" fill="#fff35c" stroke="#51483a" stroke-width="1.200" />
      <text class="exit" x="1037" y="856.700">6-1</text>

      <g v-for="(b, i) in buses" :key="'s' + i" :transform="`translate(${b[0]} ${b[1]})`">
        <rect x="-8" y="-8" width="16" height="16" rx="1" fill="#4794f2" stroke="#2c78d6" />
        <path d="M-4-4.500H4V-2H5V1H4V4.500H2.300V3H-2.300V4.500H-4V1H-5V-2H-4Z M-2.700-3V-.3H2.700V-3Z M-3 1V2H-1.700V1Z M1.700 1V2H3V1Z" fill="#fff" fill-rule="evenodd" />
      </g>

      <!-- Selected place -->
      <path d="M760 830Q757 818 749 812A13 13 0 1 1 770 812Q762 818 760 830Z" fill="#1e83f5" stroke="#176cd0" />
      <circle cx="759.500" cy="804" r="6" fill="#fff" />
      <path d="M756 802.500H763L759.500 806.500Z" fill="#1e83f5" />
      <rect x="725.500" y="767.500" width="66" height="20" rx="4" fill="#fff" stroke="#b9bec6" />
      <text class="place" x="759.500" y="781.500">예슬 이미지</text>
      <text class="brand" x="165" y="999">kakao</text>
    </svg>
  </main>
</template>

<style>
body {
  margin: 0;
  background: #fff;
}
</style>

<style scoped>
.page {
  width: 1200px;
  height: 1053px;
  margin-left: 158px;
  color: #212529;
  font: 16px/1.5 "DejaVu Serif Condensed", "Noto Sans CJK KR", serif;
  overflow: hidden;
}
h1 {
  margin: 34px 0 0;
  font: 500 40px/48px "Noto Sans CJK KR", sans-serif;
}
.intro {
  margin: 30px 0 0 10px;
  font-size: 15px;
  letter-spacing: -0.080px;
  word-spacing: 1px;
}
.intro p {
  margin: 0;
  line-height: 27.500px;
  white-space: nowrap;
}
.search {
  display: flex;
  width: 350px;
  height: 38px;
  margin: 7px 0 0 auto;
}
.search button,
.search input {
  box-sizing: border-box;
  margin: 0;
  background: #fff;
  color: #6c757d;
  font: 14px "Noto Sans CJK KR", sans-serif;
}
.search .pick {
  display: flex;
  align-items: center;
  justify-content: space-between;
  width: 115px;
  padding: 0 7px 0 16px;
  border: 1px solid #6c757d;
  border-radius: 6px 0 0 6px;
}
.search input {
  width: 182px;
  padding: 0 12px;
  border: solid #dee2e6;
  border-width: 1px 0;
}
.search .go {
  width: 53px;
  padding: 0 0 2px;
  border: 1px solid #6c757d;
  border-radius: 0 6px 6px 0;
}
table {
  width: 1200px;
  margin-top: 29px;
  table-layout: fixed;
  border-collapse: collapse;
  text-align: center;
}
.c1 { width: 54px; }
.c2 { width: 208px; }
.c3 { width: 434px; }
.c4 { width: 202px; }
.c5 { width: 152px; }
.c6 { width: 150px; }
th,
td {
  box-sizing: border-box;
  height: 42.700px;
  padding: 0;
  border-bottom: 1px solid #dee2e6;
  line-height: 24px;
  white-space: nowrap;
}
td {
  padding-top: 1px;
  letter-spacing: 0.150px;
  word-spacing: 1.200px;
}
.price {
  letter-spacing: -0.250px;
}
th {
  padding-bottom: 3px;
  font-family: "Noto Sans CJK KR", sans-serif;
  font-weight: 700;
}
thead th {
  height: 44.500px;
  padding-bottom: 2px;
  border-bottom: 2px solid #212529;
  font-size: 17px;
  letter-spacing: 0.400px;
  word-spacing: 2px;
}
.pin svg {
  display: block;
  margin: 1px auto 0;
  transform: translateX(-1px);
  fill: #000;
}
.pager {
  display: flex;
  align-items: center;
  height: 24px;
  margin: 66px 0 0 503px;
  color: #000;
}
.num {
  width: 17px;
  margin-right: 5.500px;
  font-size: 12px;
  line-height: 14px;
  text-align: center;
}
.num.on {
  background: #ece3d5;
}
.word {
  margin-right: 11px;
}
.map {
  display: block;
  margin-top: 41px;
}
.map text {
  font-family: "Noto Sans CJK KR", sans-serif;
}
.street {
  fill: none;
  stroke: #fff;
  stroke-width: 4;
  stroke-linejoin: round;
}
.street.edge {
  stroke: #d5d5d5;
  stroke-width: 6;
}
.arterial {
  fill: #fff8c8;
}
.arterial.edge {
  stroke: #d8d4c4;
  stroke-width: 2;
}
.labels text,
.station text {
  text-anchor: middle;
  stroke: #fff;
  stroke-width: 2.500px;
  stroke-linejoin: round;
  paint-order: stroke;
}
.station text {
  font-size: 12.500px;
  font-weight: 700;
}
.badge text,
.exit,
.sign,
.place {
  text-anchor: middle;
  font-weight: 700;
}
.sign {
  fill: #fff;
}
.exit {
  font-size: 10px;
  fill: #222;
}
.place {
  font-size: 12px;
  font-weight: 500;
  letter-spacing: 0.200px;
  fill: #111;
}
.brand {
  font-size: 13px;
  fill: #1d1d1d;
}
</style>
